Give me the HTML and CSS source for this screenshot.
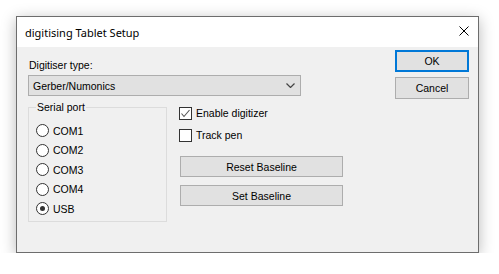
FILE: index.html
```html
<!DOCTYPE html>
<html lang="en">
<head>
    <meta charset="UTF-8" />
    <title>digitising Tablet Setup</title>
    <link rel="stylesheet" href="styles.css">
</head>
<body>

    <div class="window">
        <div class="titlebar">
            <span class="title">digitising Tablet Setup</span>
            <svg class="close" width="10" height="10" viewBox="0 0 10 10">
                <path d="M0.5 0.5 L9.5 9.5 M9.5 0.5 L0.5 9.5" stroke="#000" stroke-width="1" fill="none" />
            </svg>
        </div>

        <div class="dialog">
            <div class="main">
                <div class="label">Digitiser type:</div>
                <div class="combo">
                    <span>Gerber/Numonics</span>
                    <svg class="chevron" width="9" height="5" viewBox="0 0 9 5">
                        <path d="M0.5 0.5 L4.5 4.5 L8.5 0.5" stroke="#444" stroke-width="1.2" fill="none" />
                    </svg>
                </div>

                <div class="lower">
                    <fieldset class="group">
                        <legend>Serial port</legend>
                        <div class="radio"><span class="dot"></span>COM1</div>
                        <div class="radio"><span class="dot"></span>COM2</div>
                        <div class="radio"><span class="dot"></span>COM3</div>
                        <div class="radio"><span class="dot"></span>COM4</div>
                        <div class="radio"><span class="dot on"></span>USB</div>
                    </fieldset>

                    <div class="options">
                        <div class="check">
                            <span class="box">
                                <svg width="11" height="11" viewBox="0 0 11 11">
                                    <path d="M1.5 5.5 L4 8.5 L9.5 2" stroke="#555" stroke-width="1.1" fill="none" />
                                </svg>
                            </span>
                            Enable digitizer
                        </div>
                        <div class="check"><span class="box"></span>Track pen</div>

                        <div class="btn wide first">Reset Baseline</div>
                        <div class="btn wide">Set Baseline</div>
                    </div>
                </div>
            </div>

            <div class="side">
                <div class="btn ok">OK</div>
                <div class="btn">Cancel</div>
            </div>
        </div>
    </div>

</body>
</html>
```

FILE: styles.css
```css
body {
    margin: 0;
    background-color: #ffffff;
    font-family: "Liberation Sans", Arial, sans-serif;
    font-size: 10.5px;
    color: #000;
}

.window {
    margin: 16px 0 0 16px;
    width: 461px;
    height: 235px;
    border: 1px solid #6d6d6d;
    background-color: #f0f0f0;
    box-shadow: 0 3px 14px rgba(0, 0, 0, 0.28);
    display: flex;
    flex-direction: column;
}

.titlebar {
    height: 30px;
    background-color: #ffffff;
    display: flex;
    align-items: center;
    justify-content: space-between;
    padding: 0 9px 0 8px;
}

    .titlebar .title {
        font-family: "Noto Sans", "Open Sans", sans-serif;
        font-size: 11px;
    }

    .titlebar .close {
        margin-top: -2px;
    }

.dialog {
    display: flex;
    padding: 3px 9px 0 11px;
}

.main {
    width: 273px;
}

.label {
    margin-top: 9px;
    line-height: 13px;
    padding-left: 1px;
}

.combo {
    margin-top: 3px;
    height: 19px;
    border: 1px solid #adadad;
    background-color: #e1e1e1;
    display: flex;
    align-items: center;
    justify-content: space-between;
    padding: 0 5px 0 4px;
}

.lower {
    display: flex;
    margin-top: 5px;
}

.group {
    flex: none;
    margin: 0;
    width: 130px;
    height: 112px;
    border: 1px solid #dcdcdc;
    padding: 7px 0 0 7px;
    min-width: 0;
}

    .group legend {
        padding: 0 1px;
        line-height: 13px;
    }

.radio {
    height: 19.5px;
    display: flex;
    align-items: center;
}

.dot {
    width: 11px;
    height: 11px;
    border: 1px solid #333;
    border-radius: 50%;
    background-color: #fff;
    margin-right: 4px;
    position: relative;
}

    .dot.on::after {
        content: "";
        position: absolute;
        left: 3px;
        top: 3px;
        width: 5px;
        height: 5px;
        border-radius: 50%;
        background-color: #333;
    }

.options {
    margin-left: 12px;
    padding-top: 1px;
    flex: 1;
}

.check {
    height: 22px;
    display: flex;
    align-items: center;
}

.box {
    width: 11px;
    height: 11px;
    border: 1px solid #333;
    background-color: #fff;
    margin-right: 4px;
    display: flex;
}

.btn {
    height: 19px;
    border: 1px solid #adadad;
    background-color: #e1e1e1;
    display: flex;
    align-items: center;
    justify-content: center;
}

    .btn.wide {
        margin-left: 1px;
        width: 161px;
        margin-top: 8px;
    }

    .btn.first {
        margin-top: 10px;
    }

.side {
    margin-left: auto;
    width: 74px;
    display: flex;
    flex-direction: column;
    gap: 5px;
}

    .side .btn {
        height: 20px;
    }

    .side .ok {
        height: 18px;
        border: 2px solid #0078d7;
    }
```
